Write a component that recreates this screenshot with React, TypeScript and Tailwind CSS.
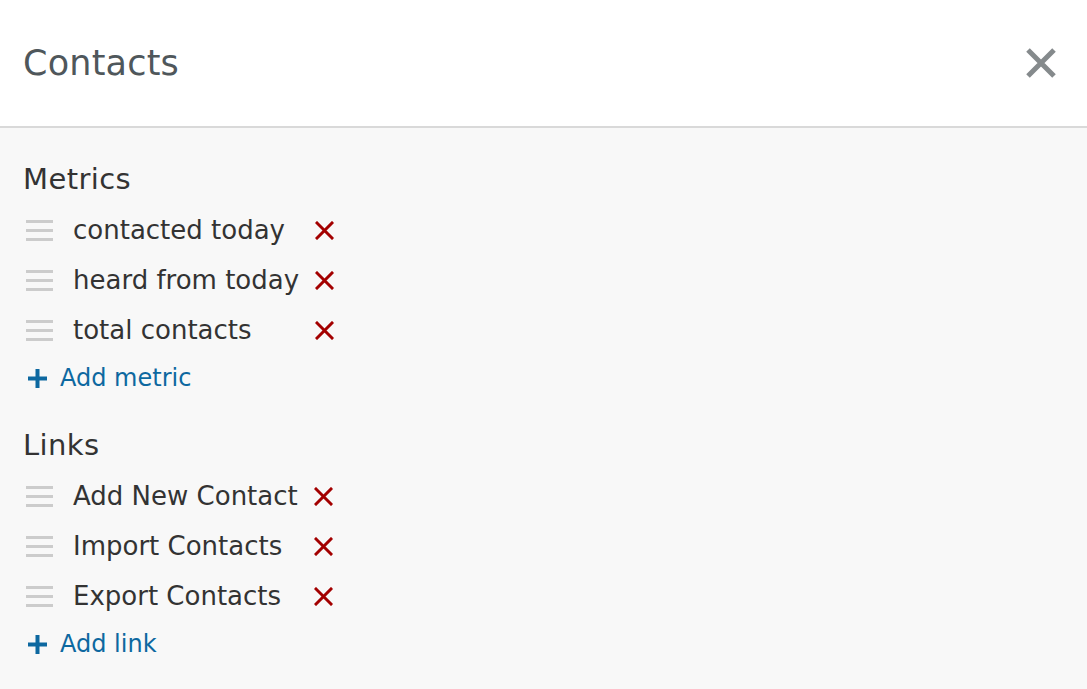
import React from 'react';

const metrics = ['contacted today', 'heard from today', 'total contacts'];
const links = ['Add New Contact', 'Import Contacts', 'Export Contacts'];

function DragHandle() {
  return (
    <div className="flex w-[27px] flex-col gap-[6px] pl-[3px]">
      <div className="h-[3px] w-[27px] bg-[#cccccc]" />
      <div className="h-[3px] w-[27px] bg-[#cccccc]" />
      <div className="h-[3px] w-[27px] bg-[#cccccc]" />
    </div>
  );
}

function RemoveIcon() {
  return (
    <svg width="19" height="19" viewBox="0 0 19 19">
      <path d="M2 2 L17 17 M17 2 L2 17" stroke="#a30000" strokeWidth="3" strokeLinecap="square" />
    </svg>
  );
}

function PlusIcon() {
  return (
    <svg width="21" height="21" viewBox="0 0 21 21">
      <path d="M10.5 1 V20 M1 10.5 H20" stroke="#0d68a0" strokeWidth="4" />
    </svg>
  );
}

function Section({ title, items, addLabel }: { title: string; items: string[]; addLabel: string }) {
  return (
    <div className="flex flex-col">
      <div className="flex h-[50px] items-center text-[29px] tracking-[0.4px] text-[#333333]">{title}</div>
      <div className="grid grid-cols-[auto_auto_auto] justify-start">
        {items.map((item) => (
          <React.Fragment key={item}>
            <div className="flex h-[50px] items-center pr-[23px]">
              <DragHandle />
            </div>
            <div className="flex h-[50px] items-center pr-[16px] text-[26px] text-[#333333]">{item}</div>
            <div className="flex h-[50px] items-center">
              <RemoveIcon />
            </div>
          </React.Fragment>
        ))}
      </div>
      <div className="flex h-[46px] items-center gap-[12px] pl-[4px] text-[24px] text-[#0d68a0]">
        <PlusIcon />
        <span>{addLabel}</span>
      </div>
    </div>
  );
}

export default function App() {
  return (
    <div className="flex h-[689px] w-[1087px] flex-col bg-[#f8f8f8] font-['DejaVu_Sans',sans-serif]">
      <div className="flex h-[128px] shrink-0 items-center justify-between border-b-2 border-[#d9d9d9] bg-white pl-[23px] pr-[30px]">
        <h1 className="text-[35px] tracking-[0.2px] text-[#4f575b]">Contacts</h1>
        <svg width="32" height="32" viewBox="0 0 32 32">
          <path d="M3 3 L29 29 M29 3 L3 29" stroke="#858a8c" strokeWidth="5" />
        </svg>
      </div>
      <div className="flex flex-col gap-[20px] pl-[23px] pt-[27px]">
        <Section title="Metrics" items={metrics} addLabel="Add metric" />
        <Section title="Links" items={links} addLabel="Add link" />
      </div>
    </div>
  );
}
